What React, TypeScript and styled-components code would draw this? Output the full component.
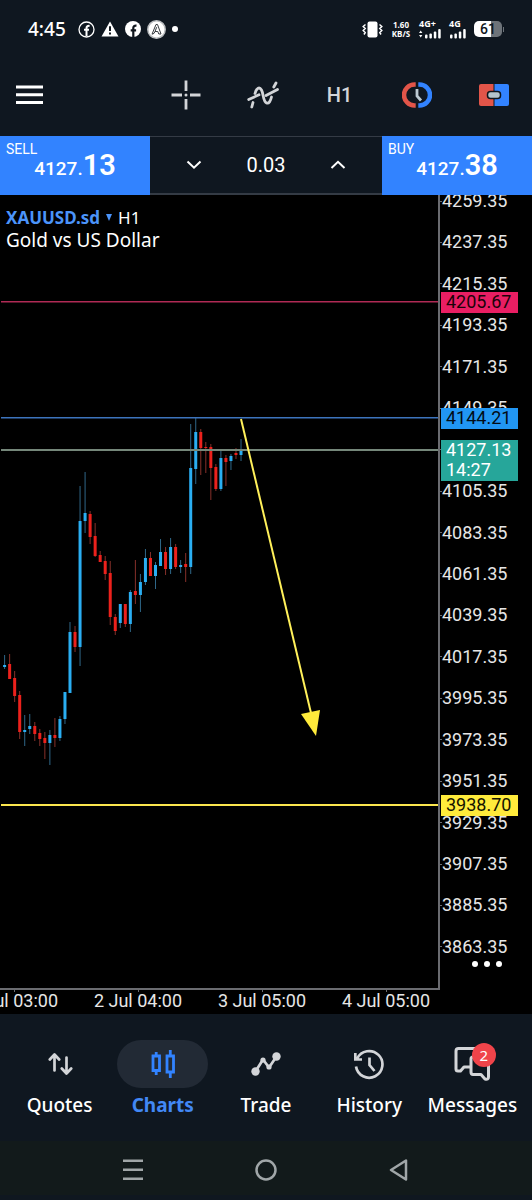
import React from 'react';
import styled, { createGlobalStyle } from 'styled-components';

const GlobalStyle = createGlobalStyle`
  *, *::before, *::after { box-sizing: border-box; }
  html, body { margin: 0; background: #0f1720; }
  body { font-family: Roboto, "Noto Sans", sans-serif; color: #fff; }
  button, input { font: inherit; color: inherit; background: none; border: 0; margin: 0; padding: 0; }
  button { cursor: pointer; }
  svg { display: block; }
`;

const BLUE = '#3283ff';
const GREY = '#d3d5d8';
const UP = '#2aaef2';
const DOWN = '#ec211c';

const Screen = styled.div`
  display: flex;
  flex-direction: column;
  min-height: 100vh;
  overflow: hidden;
`;

/* ---------- status bar ---------- */

const StatusBar = styled.div`
  display: flex;
  align-items: center;
  justify-content: space-between;
  height: 54px;
  padding: 4px 28px 0;
`;

const StatusGroup = styled.div<{ $gap: number }>`
  display: flex;
  align-items: center;
  gap: ${(p) => p.$gap}px;
`;

const Clock = styled.time`
  width: 44px;
  font: 500 19px/24px "Noto Sans", sans-serif;
`;

const Speed = styled.div`
  width: 20px;
  font: 700 8px/9px "Noto Sans", sans-serif;
  text-align: center;
  white-space: nowrap;
`;

const Signal = styled.div`
  display: flex;
  flex-direction: column;
  font: 700 9px/8px "Noto Sans", sans-serif;
`;

const Battery = styled.div`
  display: flex;
  align-items: center;
  gap: 1px;

  &::after {
    content: "";
    width: 1px;
    height: 5px;
    background: #6d7379;
  }
`;

const BatteryCell = styled.div`
  width: 28px;
  height: 16px;
  border-radius: 5px;
  background: linear-gradient(to right, #fff 61%, #6d7379 61%);
  color: #10161d;
  font: 500 14px/16px Roboto, sans-serif;
  text-align: center;
`;

/* ---------- toolbar ---------- */

const Toolbar = styled.header`
  display: flex;
  align-items: center;
  height: 82px;
`;

const MenuButton = styled.button`
  margin-right: auto;
  padding: 12px 16px;
`;

const ToolButton = styled.button`
  display: flex;
  align-items: center;
  justify-content: center;
  width: 77px;
  height: 56px;
  color: ${GREY};
  font: 500 20px/24px Roboto, sans-serif;
`;

/* ---------- one-click trading ---------- */

const TradeBar = styled.section`
  display: grid;
  grid-template-columns: 150px 1fr 150px;
  height: 59px;
`;

const DealButton = styled.button`
  display: flex;
  flex-direction: column;
  padding: 6px 6px 0;
  background: ${BLUE};
  text-align: left;
`;

const DealSide = styled.span`
  font: 400 14px/14px Roboto, sans-serif;
`;

const DealPrice = styled.span`
  align-self: center;
  font: 500 19px/18px Roboto, sans-serif;

  strong {
    font-size: 29px;
    font-weight: 600;
  }
`;

const Volume = styled.div`
  display: flex;
  align-items: center;
  justify-content: center;
  border-top: 1px solid #343b45;
  border-bottom: 2px solid #343b45;
`;

const StepButton = styled.button`
  display: flex;
  padding: 16px;
`;

const VolumeInput = styled.input`
  width: 96px;
  font: 400 20px/24px Roboto, sans-serif;
  text-align: center;
  outline: none;
`;

/* ---------- chart ---------- */

const Chart = styled.main`
  flex: 1;
  display: grid;
  grid-template-columns: 1fr 92px;
  grid-template-rows: 1fr 26px;
  background: #000;
  overflow: hidden;
`;

const Plot = styled.section`
  position: relative;
  min-width: 0;
  min-height: 793px;
  border-right: 2px solid #6a6b70;
`;

const PlotSvg = styled.svg`
  width: 100%;
  height: 100%;
`;

const Caption = styled.div`
  position: absolute;
  top: 11px;
  left: 6px;
  font: 400 19px/23px "Noto Sans", sans-serif;
`;

const SymbolButton = styled.button`
  display: flex;
  align-items: center;
  gap: 6px;
  font-size: 17px;

  strong {
    color: #4b94fa;
  }
`;

const PriceAxis = styled.aside`
  position: relative;
  font: 400 18px/20px Roboto, sans-serif;
`;

const PriceScale = styled.ol`
  display: flex;
  flex-direction: column;
  justify-content: space-between;
  height: 766px;
  margin: -4px 0 0;
  padding: 0;
  list-style: none;
`;

const PriceLabel = styled.li`
  display: flex;
  align-items: center;
  color: #e6e6e6;

  &::before {
    content: "";
    width: 2px;
    height: 1px;
    background: #6a6b70;
  }
`;

const PriceTag = styled.div<{ $color: string; $ink: string }>`
  position: absolute;
  left: 1px;
  width: 77px;
  padding: 0 0 1px 5px;
  background: ${(p) => p.$color};
  color: ${(p) => p.$ink};
`;

const MoreButton = styled.button`
  position: absolute;
  top: 758px;
  left: 27px;
  padding: 8px 5px;
`;

const TimeAxis = styled.div`
  display: flex;
  border-top: 2px solid #6a6b70;
  overflow: hidden;
  color: #e6e6e6;
  font: 400 18px/18px Roboto, sans-serif;
`;

const TimeLabel = styled.span`
  flex: 0 0 124px;
  display: flex;
  flex-direction: column;
  align-items: center;
  white-space: nowrap;

  &:first-child {
    margin-left: -48px;
  }

  &::before {
    content: "";
    width: 1px;
    height: 2px;
    background: #6a6b70;
  }
`;

/* ---------- bottom navigation ---------- */

const Tabs = styled.nav`
  display: grid;
  grid-template-columns: repeat(5, 1fr);
  height: 127px;
  padding: 26px 8px 0;
`;

const Tab = styled.a<{ $active?: boolean }>`
  display: flex;
  flex-direction: column;
  align-items: center;
  gap: 5px;
  color: ${(p) => (p.$active ? '#4288f5' : '#fff')};
  font: ${(p) => (p.$active ? 700 : 500)} 19px/24px "Noto Sans", sans-serif;
  text-decoration: none;
`;

const TabIcon = styled.span<{ $active?: boolean }>`
  position: relative;
  display: flex;
  align-items: center;
  justify-content: center;
  width: 91px;
  height: 48px;
  border-radius: 24px;
  background: ${(p) => (p.$active ? '#222a35' : 'transparent')};
  color: ${(p) => (p.$active ? BLUE : GREY)};
`;

const Badge = styled.span`
  position: absolute;
  top: 3px;
  right: 22px;
  width: 24px;
  height: 24px;
  border-radius: 12px;
  background: #f0444a;
  color: #fff;
  font: 400 15px/24px "Noto Sans", sans-serif;
  text-align: center;
`;

const SystemBar = styled.footer`
  display: grid;
  grid-template-columns: repeat(3, 1fr);
  height: 54px;
  margin-bottom: 5px;
  padding: 4px 12.5% 0;
  background: #121a1b;
`;

const SystemButton = styled.button`
  display: flex;
  align-items: center;
  justify-content: center;
  color: #a0a6a8;
`;

/* ---------- chart data ---------- */

const TOP_PRICE = 4259.35;
const PRICE_STEP = 22;
const STEP_HEIGHT = 746 / 18;
const TOP_LABEL_Y = 6;

const priceToY = (price: number) =>
  Math.round(TOP_LABEL_Y + ((TOP_PRICE - price) / PRICE_STEP) * STEP_HEIGHT);

const priceLabels = Array.from({ length: 19 }, (_, i) => (TOP_PRICE - i * PRICE_STEP).toFixed(2));
const timeLabels = ['1 Jul 03:00', '2 Jul 04:00', '3 Jul 05:00', '4 Jul 05:00'];

const levels = [
  { price: 4205.67, line: '#b02a55', tag: '#e91e63', ink: '#1a0209', width: 1.5 },
  { price: 4144.21, line: '#3d74bd', tag: '#2196f3', ink: '#020c16', width: 1.5 },
  { price: 4127.13, line: '#75877a', tag: '#26a69a', ink: '#fff', width: 2, countdown: '14:27' },
  { price: 3938.7, line: '#fbe64e', tag: '#ffeb3b', ink: '#141300', width: 2 },
];

type Candle = [dir: 'u' | 'd', high: number, top: number, bottom: number, low: number];

const candles: Candle[] = [
  ['u', 460, 470, 472, 474], ['d', 459, 469, 484, 484], ['d', 476, 483, 501, 507],
  ['d', 496, 500, 537, 544], ['u', 520, 535, 537, 551], ['u', 519, 531, 534, 539],
  ['d', 527, 531, 539, 546], ['d', 534, 538, 544, 551], ['d', 537, 543, 548, 564],
  ['u', 535, 540, 548, 570], ['d', 523, 540, 543, 552], ['u', 521, 524, 543, 546],
  ['u', 497, 497, 524, 529], ['u', 427, 437, 498, 498], ['d', 431, 437, 452, 457],
  ['u', 291, 326, 452, 471], ['u', 277, 318, 326, 338], ['d', 316, 319, 342, 349],
  ['d', 328, 341, 361, 362], ['d', 356, 360, 367, 367], ['d', 361, 366, 379, 385],
  ['d', 366, 378, 422, 430], ['d', 419, 422, 436, 440], ['u', 409, 409, 428, 433],
  ['d', 409, 409, 429, 432], ['u', 395, 397, 429, 437], ['d', 365, 396, 400, 409],
  ['u', 379, 387, 400, 417], ['u', 354, 363, 387, 390], ['d', 357, 363, 381, 381],
  ['u', 367, 370, 381, 394], ['u', 344, 357, 371, 371], ['d', 352, 357, 374, 380],
  ['u', 343, 352, 374, 379], ['d', 349, 352, 372, 374], ['u', 365, 370, 372, 378],
  ['d', 358, 369, 372, 387], ['u', 229, 273, 372, 379], ['u', 223, 237, 274, 289],
  ['d', 234, 237, 253, 280], ['d', 247, 252, 253, 278], ['d', 249, 252, 273, 305],
  ['d', 269, 272, 294, 296], ['u', 255, 263, 294, 296], ['d', 260, 263, 267, 291],
  ['u', 259, 261, 266, 275], ['d', 253, 258, 260, 264], ['u', 244, 255, 260, 266],
];

const candleX = (index: number) => 4.6 + index * 5.03;

/* ---------- icons ---------- */

const FacebookOutline = () => (
  <svg width="17" height="17" viewBox="0 0 17 17" fill="none" stroke="#fff" aria-hidden="true">
    <circle cx="8.500" cy="8.500" r="7.500" strokeWidth="1.300" />
    <path d="M8.500 15V7.200Q8.500 4.600 11.600 4.900M6 8.800h5" strokeWidth="2" />
  </svg>
);

const Warning = () => (
  <svg width="18" height="16" viewBox="0 0 18 16" aria-hidden="true">
    <path d="M9 0.500L17.500 15.500H0.500Z" fill="#fff" />
    <path d="M9 5.200V10M9 11.600V13.600" stroke="#10161d" strokeWidth="2" />
  </svg>
);

const FacebookSolid = () => (
  <svg width="16" height="16" viewBox="0 0 16 16" aria-hidden="true">
    <circle cx="8" cy="8" r="8" fill="#fff" />
    <path d="M8.300 16V7Q8.300 4.300 11.500 4.600M5.700 9.300h5.400" fill="none" stroke="#10161d" strokeWidth="2.200" />
  </svg>
);

const AppBadge = () => (
  <svg width="19" height="19" viewBox="0 0 19 19" fill="none" aria-hidden="true">
    <circle cx="9.500" cy="9.500" r="8.700" fill="#fff" stroke="#b9bcbf" strokeWidth="1.500" />
    <path d="M5 14.200L9 4.500H10.500L14 14H11.800L10.800 11.500H8L9.700 7.200M5 14.200L7 13.400L8 11.500" stroke="#363b40" strokeLinejoin="round" />
  </svg>
);

const Vibrate = () => (
  <svg width="21" height="17" viewBox="0 0 21 17" fill="none" stroke="#fff" strokeWidth="1.500" aria-hidden="true">
    <rect x="5.500" y="0.500" width="10" height="16" rx="2" fill="#fff" stroke="none" />
    <path d="M3.500 3.500L1.200 5.500L3.200 7.500L1.200 9.500L3.200 11.500L2 13.500M17.500 3.500L19.800 5.500L17.800 7.500L19.800 9.500L17.800 11.500L19 13.500" />
  </svg>
);

const SignalBars = ({ arrows = false }: { arrows?: boolean }) => (
  <svg width={arrows ? 22 : 17} height="11" viewBox={arrows ? '0 0 22 11' : '-1 0 17 11'} fill="#fff" aria-hidden="true">
    {arrows && <path d="M0 5L1.700 2.500L3.400 5ZM0 7L1.700 9.500L3.400 7Z" />}
    {[4, 5, 7, 9.500].map((h, i) => (
      <rect key={h} x={(arrows ? 6 : 0) + i * 4.400} y={10.500 - h} width="2.500" height={h} rx="1" />
    ))}
  </svg>
);

const Burger = () => (
  <svg width="27" height="20" viewBox="0 0 27 20" fill="#fff" aria-hidden="true">
    <path d="M0 0.500h27v3H0zM0 8.300h27v3H0zM0 16h27v3H0z" />
  </svg>
);

const Crosshair = () => (
  <svg width="30" height="30" viewBox="0 0 30 30" fill="none" stroke={GREY} strokeWidth="2.800" aria-hidden="true">
    <path d="M15 0.500V11M15 19V29.500M0.500 15H11M19 15H29.500" />
    <circle cx="15" cy="15" r="1.500" fill={GREY} stroke="none" />
  </svg>
);

const Indicators = () => (
  <svg width="32" height="28" viewBox="0 0 32 28" fill="none" stroke={GREY} strokeWidth="2.800" strokeLinecap="round" aria-hidden="true">
    <path d="M4.800 26L6 21.500M8 12.500C9.500 6.500 12.500 5.500 14.500 9C16.500 12.500 16 20.500 19.500 22C22 23 23.500 20 24.500 16M26.800 6L29 2" />
    <path d="M1.700 18.500L12 13.800M19 14.500L30.500 8.500" />
  </svg>
);

const TradeClock = () => (
  <svg width="30" height="26" viewBox="0 0 30 26" fill="none" aria-hidden="true">
    <path d="M13.700 2.500H12.500A10.500 10.500 0 0 0 12.500 23.500H13.700" stroke="#e25549" strokeWidth="4.500" />
    <path d="M16.300 2.500H17.500A10.500 10.500 0 0 1 17.500 23.500H16.300" stroke={BLUE} strokeWidth="4.500" />
    <path d="M15 7V14L19 18.500" stroke="#bcc9d2" strokeWidth="2.800" />
  </svg>
);

const OneClick = () => (
  <svg width="30" height="22" viewBox="0 0 30 22" aria-hidden="true">
    <path d="M14.500 0V22H2Q0 22 0 20V2Q0 0 2 0Z" fill="#e25549" />
    <path d="M15.500 0V22H28Q30 22 30 20V2Q30 0 28 0Z" fill={BLUE} />
    <rect x="8.500" y="7.500" width="13" height="7" rx="3" fill="#b4c4cc" stroke="#10161d" strokeWidth="1.500" />
  </svg>
);

const Chevron = ({ up = false }: { up?: boolean }) => (
  <svg width="16" height="10" viewBox="0 0 16 10" fill="none" stroke="#fff" strokeWidth="2" aria-hidden="true">
    <path d={up ? 'M1.500 8L8 1.800L14.500 8' : 'M1.500 1.500L8 7.700L14.500 1.500'} />
  </svg>
);

const QuotesIcon = () => (
  <svg width="26" height="24" viewBox="0 0 26 24" fill="none" stroke="currentColor" strokeWidth="2.700" strokeLinecap="round" strokeLinejoin="round" aria-hidden="true">
    <path d="M7.500 18.500V3M2.800 7.500L7.500 2.500L12.200 7.500M19.500 5.500V21M14.800 16.500L19.500 21.500L24.200 16.500" />
  </svg>
);

const ChartsIcon = () => (
  <svg width="24" height="28" viewBox="0 0 24 28" fill="none" stroke="currentColor" strokeWidth="2.800" aria-hidden="true">
    <path d="M2 6H8.500V20.500H2ZM5.200 2V6M5.200 20.500V25M16 6H22.500V22H16ZM19.300 0V6M19.300 22V28" />
  </svg>
);

const TradeIcon = () => (
  <svg width="30" height="26" viewBox="0 0 30 26" fill="none" stroke="currentColor" strokeWidth="2.700" strokeLinejoin="round" aria-hidden="true">
    <path d="M4.500 20.500L12 8.500L18 16.500L25.500 5.500" />
    <g fill="currentColor" stroke="none">
      <circle cx="4.500" cy="20.500" r="4.200" />
      <circle cx="12" cy="9" r="2.600" />
      <circle cx="18" cy="16" r="2.600" />
      <circle cx="25.500" cy="5.500" r="4.200" />
    </g>
  </svg>
);

const HistoryIcon = () => (
  <svg width="30" height="32" viewBox="0 0 30 32" fill="none" stroke="currentColor" strokeWidth="2.700" aria-hidden="true">
    <path d="M3.200 10.500A13.300 13.300 0 1 1 2 18.500M1.300 5V11.500H8M15.500 9.500V17L20.500 23" />
  </svg>
);

const MessagesIcon = () => (
  <svg width="36" height="34" viewBox="0 0 36 34" fill="none" stroke="currentColor" strokeWidth="3" strokeLinejoin="round" aria-hidden="true">
    <path d="M16 20H10L6.500 24H4Q2 24 2 22V4Q2 1.500 4.500 1.500H24" />
    <path d="M24 10H19Q17 10 17 12V25Q17 27.500 19 27.500H27L31 32Q34.500 33 34.500 30V14" />
  </svg>
);

const RecentsIcon = () => (
  <svg width="20" height="22" viewBox="0 0 20 22" fill="currentColor" aria-hidden="true">
    <path d="M0 0.500h20v2.600H0zM0 9.500h20v2.600H0zM0 18.500h20v2.600H0z" />
  </svg>
);

const HomeIcon = () => (
  <svg width="22" height="22" viewBox="0 0 22 22" fill="none" stroke="currentColor" strokeWidth="2.500" aria-hidden="true">
    <circle cx="11" cy="11" r="9.500" />
  </svg>
);

const BackIcon = () => (
  <svg width="20" height="22" viewBox="0 0 20 22" fill="none" stroke="currentColor" strokeWidth="2.500" strokeLinejoin="round" aria-hidden="true">
    <path d="M2 11L17 1.500V20.500Z" />
  </svg>
);

const MoreIcon = () => (
  <svg width="30" height="6" viewBox="0 0 30 6" fill="#fff" aria-hidden="true">
    <circle cx="3" cy="3" r="3" />
    <circle cx="15" cy="3" r="3" />
    <circle cx="27" cy="3" r="3" />
  </svg>
);

/* ---------- page ---------- */

const tabs = [
  { name: 'Quotes', Icon: QuotesIcon },
  { name: 'Charts', Icon: ChartsIcon, active: true },
  { name: 'Trade', Icon: TradeIcon },
  { name: 'History', Icon: HistoryIcon },
  { name: 'Messages', Icon: MessagesIcon, unread: 2 },
];

export default function App() {
  return (
    <Screen>
      <GlobalStyle />

      <StatusBar>
        <StatusGroup $gap={6}>
          <Clock>4:45</Clock>
          <FacebookOutline />
          <Warning />
          <FacebookSolid />
          <AppBadge />
          <svg width="6" height="6" viewBox="0 0 6 6" aria-hidden="true">
            <circle cx="3" cy="3" r="3" fill="#fff" />
          </svg>
        </StatusGroup>
        <StatusGroup $gap={8}>
          <Vibrate />
          <Speed>
            1.60
            <br />
            KB/S
          </Speed>
          <Signal>
            4G+
            <SignalBars arrows />
          </Signal>
          <Signal>
            4G
            <SignalBars />
          </Signal>
          <Battery>
            <BatteryCell>61</BatteryCell>
          </Battery>
        </StatusGroup>
      </StatusBar>

      <Toolbar>
        <MenuButton aria-label="Menu">
          <Burger />
        </MenuButton>
        <ToolButton aria-label="Crosshair">
          <Crosshair />
        </ToolButton>
        <ToolButton aria-label="Indicators">
          <Indicators />
        </ToolButton>
        <ToolButton>H1</ToolButton>
        <ToolButton aria-label="Pending order">
          <TradeClock />
        </ToolButton>
        <ToolButton aria-label="One-click trading">
          <OneClick />
        </ToolButton>
      </Toolbar>

      <TradeBar>
        <DealButton>
          <DealSide>SELL</DealSide>
          <DealPrice>
            4127.<strong>13</strong>
          </DealPrice>
        </DealButton>
        <Volume>
          <StepButton aria-label="Decrease volume">
            <Chevron />
          </StepButton>
          <VolumeInput aria-label="Volume" defaultValue="0.03" />
          <StepButton aria-label="Increase volume">
            <Chevron up />
          </StepButton>
        </Volume>
        <DealButton>
          <DealSide>BUY</DealSide>
          <DealPrice>
            4127.<strong>38</strong>
          </DealPrice>
        </DealButton>
      </TradeBar>

      <Chart>
        <Plot>
          <PlotSvg role="img" aria-label="XAUUSD.sd hourly candles">
            {candles.map(([dir, high, top, bottom, low], i) => (
              <g key={i}>
                <rect x={candleX(i) - 0.5} y={high} width={1} height={low - high} fill={dir === 'u' ? '#2f6788' : '#86302a'} />
                <rect x={candleX(i) - 1.5} y={top} width={3} height={bottom - top} fill={dir === 'u' ? UP : DOWN} />
              </g>
            ))}
            {levels.map((level) => (
              <rect key={level.price} x="1" y={priceToY(level.price) - 1} width="100%" height={level.width} fill={level.line} />
            ))}
            <path d="M241 224L311 518" stroke="#fff05a" strokeWidth="2" />
            <path d="M301 519L320 515L316 541Z" fill="#ffeb3b" />
          </PlotSvg>
          <Caption>
            <SymbolButton>
              <strong>XAUUSD.sd</strong>
              <svg width="6" height="7" viewBox="0 0 6 7" aria-hidden="true">
                <path d="M0 0H6L3 7Z" fill="#4b94fa" />
              </svg>
              H1
            </SymbolButton>
            Gold vs US Dollar
          </Caption>
        </Plot>

        <PriceAxis>
          <PriceScale>
            {priceLabels.map((label) => (
              <PriceLabel key={label}>{label}</PriceLabel>
            ))}
          </PriceScale>
          {levels.map((level) => (
            <PriceTag key={level.price} $color={level.tag} $ink={level.ink} style={{ top: priceToY(level.price) - 10 }}>
              {level.price.toFixed(2)}
              {level.countdown && <div>{level.countdown}</div>}
            </PriceTag>
          ))}
          <MoreButton aria-label="More">
            <MoreIcon />
          </MoreButton>
        </PriceAxis>

        <TimeAxis>
          {timeLabels.map((label) => (
            <TimeLabel key={label}>{label}</TimeLabel>
          ))}
        </TimeAxis>
      </Chart>

      <Tabs>
        {tabs.map(({ name, Icon, active, unread }) => (
          <Tab key={name} href={`#${name.toLowerCase()}`} $active={active}>
            <TabIcon $active={active}>
              <Icon />
              {unread && <Badge>{unread}</Badge>}
            </TabIcon>
            {name}
          </Tab>
        ))}
      </Tabs>

      <SystemBar>
        <SystemButton aria-label="Recent apps">
          <RecentsIcon />
        </SystemButton>
        <SystemButton aria-label="Home">
          <HomeIcon />
        </SystemButton>
        <SystemButton aria-label="Back">
          <BackIcon />
        </SystemButton>
      </SystemBar>
    </Screen>
  );
}
